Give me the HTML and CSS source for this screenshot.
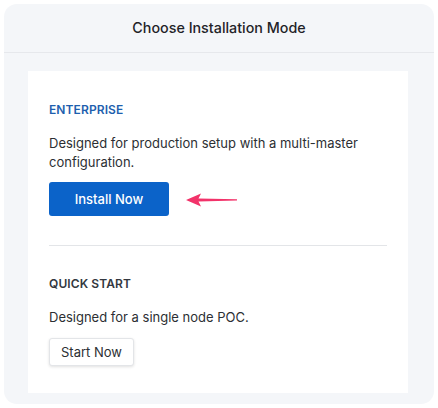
FILE: index.html
```html
<!DOCTYPE html>
<html>
<head>
<meta charset="utf-8">
<link rel="stylesheet" href="styles.css">
</head>
<body>
<div class="panel">
  <div class="header">Choose Installation Mode</div>
  <div class="body">
    <div class="card">
      <section class="mode">
        <h3 class="mode-title primary">ENTERPRISE</h3>
        <p class="mode-desc">Designed for production setup with a multi-master configuration.</p>
        <div class="action-row">
          <button class="btn btn-primary">Install Now</button>
          <svg class="arrow" width="54" height="16" viewBox="0 0 54 16">
            <path d="M1 8 L16 1.5 L13.5 6.5 L52 7.2 L52 8.4 L13.5 9.5 L16 14.5 Z" fill="#f2336a"/>
          </svg>
        </div>
      </section>
      <hr class="divider">
      <section class="mode">
        <h3 class="mode-title">QUICK START</h3>
        <p class="mode-desc">Designed for a single node POC.</p>
        <div class="action-row secondary">
          <button class="btn btn-default">Start Now</button>
        </div>
      </section>
    </div>
  </div>
</div>
</body>
</html>
```
FILE: styles.css
```css
* { box-sizing: border-box; }
html, body { margin: 0; padding: 0; background: #ffffff; }
body {
  font-family: Inter, "Noto Sans", sans-serif;
  padding: 4px;
  width: 438px;
  height: 408px;
}
.panel {
  width: 430px;
  height: 400px;
  background: #f4f6f9;
  border-radius: 13px;
  display: flex;
  flex-direction: column;
  overflow: hidden;
}
.header {
  height: 49px;
  border-bottom: 1px solid #e6e8ec;
  display: flex;
  align-items: center;
  justify-content: center;
  font-size: 14.3px;
  font-weight: 500;
  color: #1f2328;
  padding-bottom: 1px;
}
.body {
  flex: 1;
  padding: 18px 26px 11px 24px;
  display: flex;
}
.card {
  flex: 1;
  background: #ffffff;
  padding: 31px 21px 0 21px;
}
.mode-title {
  margin: 0;
  font-size: 12px;
  font-weight: 600;
  letter-spacing: 0.1px;
  color: #333840;
  line-height: 16px;
}
.mode-title.primary { color: #1e5fae; }
.mode-desc {
  margin: 16px 0 0 0;
  font-size: 13px;
  line-height: 19px;
  color: #2c2f33;
  padding-right: 20px;
}
.action-row {
  display: flex;
  align-items: center;
  margin-top: 10px;
}
.action-row.secondary { margin-top: 11px; }
.btn {
  font-family: Inter, "Noto Sans", sans-serif;
  font-size: 13px;
  border-radius: 3px;
  cursor: pointer;
}
.btn-primary {
  width: 120px;
  height: 34px;
  background: #0b63c9;
  color: #ffffff;
  border: none;
  font-weight: 500;
}
.btn-default {
  width: 85px;
  height: 28px;
  background: #ffffff;
  color: #2c2f33;
  border: 1px solid #e3e5e8;
  box-shadow: 0 1px 3px rgba(0,0,0,0.12);
}
.arrow { margin-left: 16px; margin-top: 2px; }
.divider {
  border: none;
  border-top: 1px solid #e3e5e8;
  margin: 29px 0 30px 0;
}
```
